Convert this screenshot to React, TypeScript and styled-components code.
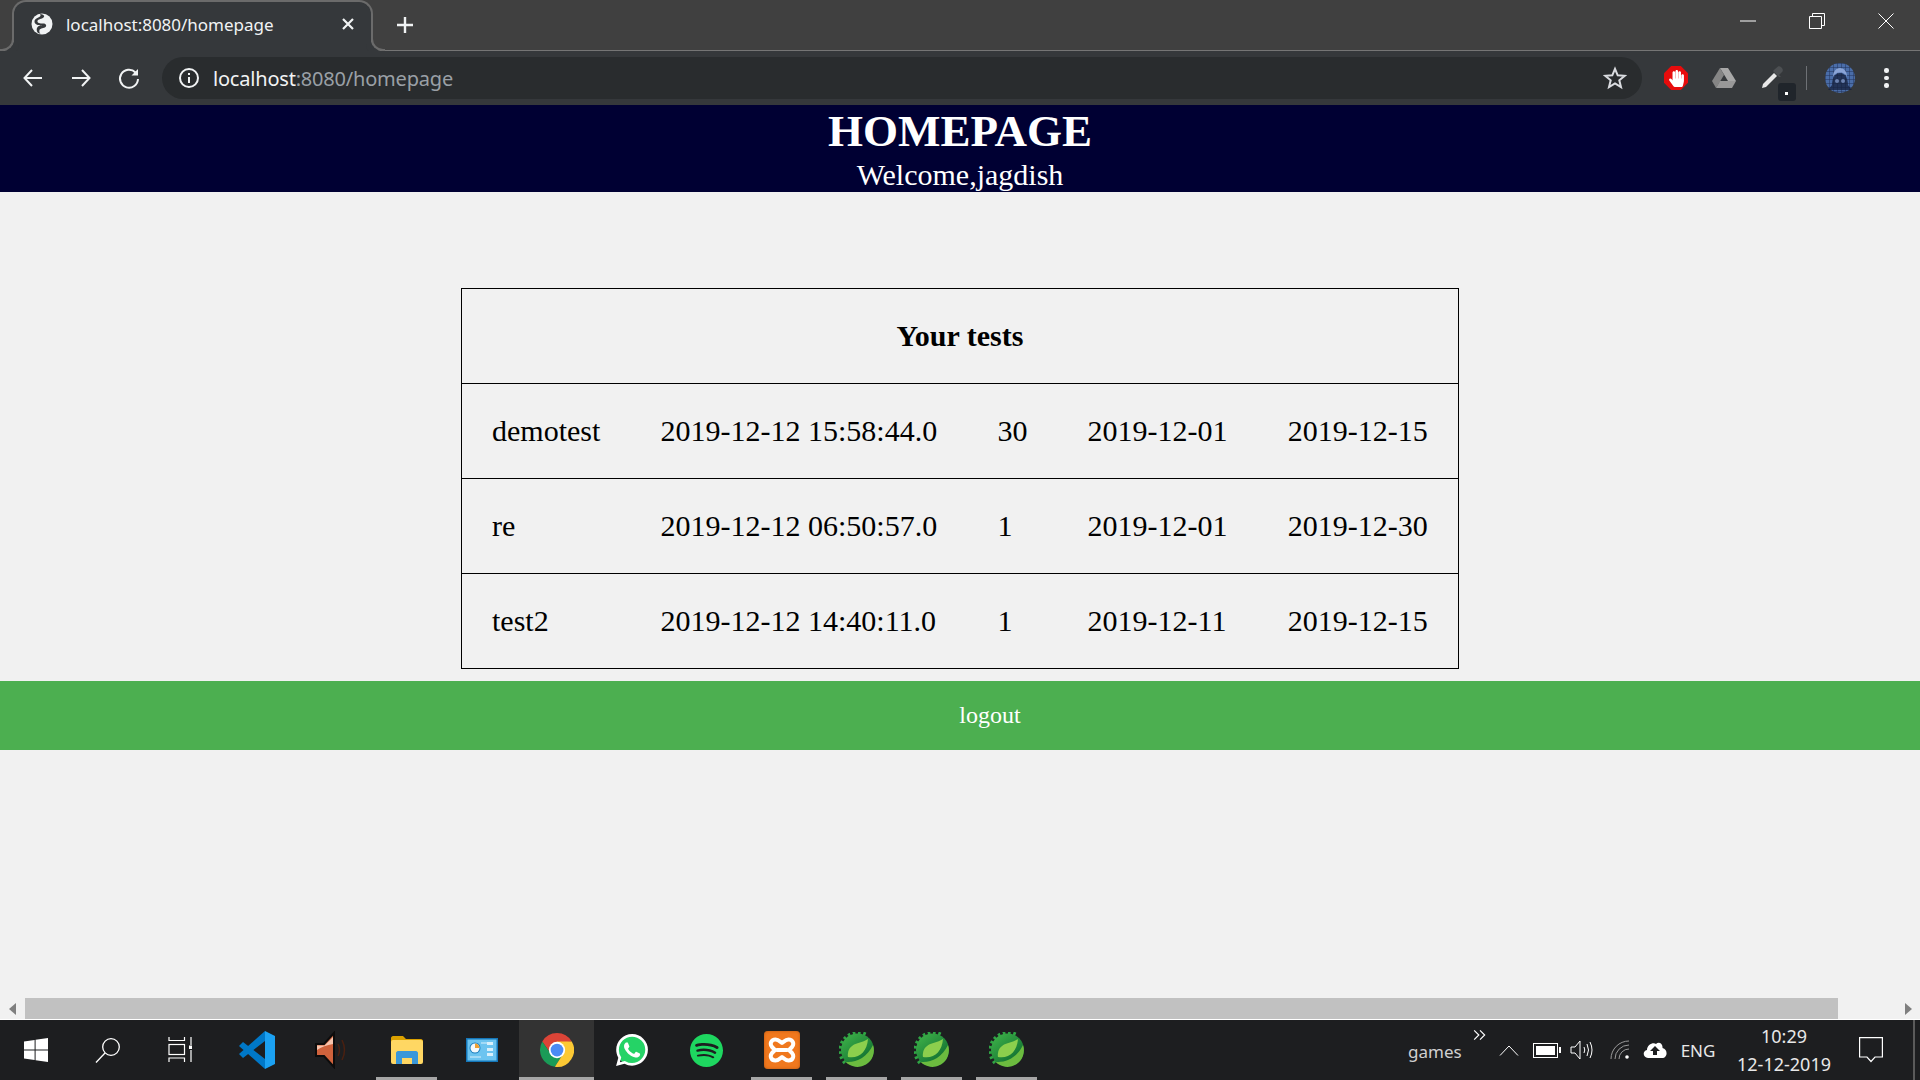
import React from "react"
import styled, { createGlobalStyle } from "styled-components"
import { FaHandPaper } from "react-icons/fa"
import { SiSpotify, SiWhatsapp } from "react-icons/si"

const rows = [
    ["demotest", "2019-12-12 15:58:44.0", "30", "2019-12-01", "2019-12-15"],
    ["re", "2019-12-12 06:50:57.0", "1", "2019-12-01", "2019-12-30"],
    ["test2", "2019-12-12 14:40:11.0", "1", "2019-12-11", "2019-12-15"],
]

function Globe() {
    return <svg width="22" height="22" viewBox="0 0 22 22">
        <circle cx="11" cy="11" r="10.5" fill="#f1f3f4" />
        <path d="M9 1 C13 1.5 14 3 12.5 4.5 C11 6 7 6 6.5 8 C6 10 9 10.5 12 10.5 C15 10.5 16 12.5 14.5 14 C13 15.5 9.5 15 8.5 17 C8 18.5 8.5 20 9.5 20.7 L7 20 C5.5 18 5 15.5 7 13.5 C8 12.5 10.5 13 11 12.5 C8 12.5 3.5 12 3.5 8.5 C3.5 5.5 7 5 9 3.5 C10 2.5 9.5 1.5 9 1Z" fill="#35383b" />
    </svg>
}

function Back({ flip }: { flip?: boolean }) {
    return <svg width="24" height="24" viewBox="0 0 24 24" fill="none" stroke="#f1f3f4" strokeWidth="2" style={{ transform: flip ? "scaleX(-1)" : undefined }}>
        <path d="M21 12 H4 M11 4 L3.5 12 L11 20" />
    </svg>
}

function Reload() {
    return <svg width="24" height="24" viewBox="0 0 24 24" fill="none" stroke="#f1f3f4" strokeWidth="2">
        <path d="M18.5 6.5 A9 9 0 1 0 21 13" />
        <path d="M21 3 V9.5 H14.5 Z" fill="#f1f3f4" stroke="none" />
    </svg>
}

function Info() {
    return <svg width="22" height="22" viewBox="0 0 22 22" fill="none" stroke="#f1f3f4" strokeWidth="2">
        <circle cx="11" cy="11" r="9" />
        <path d="M11 10 V16 M11 6 V8" />
    </svg>
}

function Star() {
    return <svg width="24" height="24" viewBox="0 0 24 24" fill="none" stroke="#dadce0" strokeWidth="2">
        <path d="M12 2.8 L14.7 9.3 L21.7 9.8 L16.3 14.3 L18 21.1 L12 17.4 L6 21.1 L7.7 14.3 L2.3 9.8 L9.3 9.3Z" />
    </svg>
}

function Drive() {
    return <svg width="24" height="22" viewBox="0 0 24 22">
        <path d="M8 1 L0 14 L4 21 L12 8Z" fill="#858585" />
        <path d="M8 1 H16 L24 14 H16Z" fill="#a8a8a8" />
        <path d="M4 21 L8 14 H24 L20 21Z" fill="#989898" />
    </svg>
}

function Dropper() {
    return <svg width="24" height="24" viewBox="0 0 24 24">
        <path d="M2 22 L3 18 L14 7 L17 10 L6 21 Z" fill="#e8e8e8" />
        <path d="M13 5 L15 3 L18 0.5 C20 -0.5 24 3 22.5 5.5 L19 9 L21 11 L19 11 Z" fill="#4c4f52" />
    </svg>
}

function Avatar() {
    return <svg width="30" height="30" viewBox="0 0 30 30">
        <defs>
            <pattern id="grid" width="4" height="4" patternUnits="userSpaceOnUse">
                <rect width="4" height="4" fill="#4a6da8" />
                <path d="M0 0 H4 M0 0 V4" stroke="#22325a" strokeWidth="1" />
            </pattern>
        </defs>
        <circle cx="15" cy="15" r="15" fill="url(#grid)" />
        <path d="M7 22 C7 6 23 6 23 22 L27 27 H3Z" fill="#16203c" opacity="0.75" />
        <path d="M8 14 C8 2 22 2 22 14 C20 8 10 8 8 14Z" fill="#8aa4d6" />
        <circle cx="12" cy="18" r="2" fill="#8aa4d6" opacity="0.7" />
        <circle cx="18" cy="18" r="2" fill="#8aa4d6" opacity="0.7" />
    </svg>
}

function Windows() {
    return <svg width="24" height="24" viewBox="0 0 24 24" fill="#fff">
        <path d="M0 3.4 L10.6 2 V11.4 H0Z M11.6 1.8 L24 0 V11.4 H11.6Z M0 12.5 H10.6 V22 L0 20.6Z M11.6 12.5 H24 V24 L11.6 22.2Z" />
    </svg>
}

function SearchGlyph() {
    return <svg width="26" height="28" viewBox="0 0 26 28" fill="none" stroke="#fff" strokeWidth="1.3">
        <circle cx="16" cy="11" r="8.3" />
        <path d="M10 17 L1 26.5" />
    </svg>
}

function TaskView() {
    return <svg width="24" height="26" viewBox="0 0 24 26" fill="none" stroke="#fff" strokeWidth="1.2">
        <path d="M1 0 V3.5 H16.5 V0 M1 25 V21 H16.5 V25" />
        <rect x="1" y="7.5" width="15.5" height="10" />
        <path d="M23 0 V8 M23 13 V25" />
        <rect x="21" y="8.5" width="3.5" height="3.5" fill="#fff" stroke="none" />
    </svg>
}

function VsCode() {
    return <svg width="36" height="38" viewBox="0 0 36 38">
        <path d="M26 0 L0 23 L4 27 L26 10Z" fill="#0078c8" />
        <path d="M26 38 L0 15 L4 11 L26 28Z" fill="#0078c8" />
        <path d="M26 0 L36 5 V33 L26 38Z" fill="#1ba1f2" />
    </svg>
}

function Speaker() {
    return <svg width="34" height="38" viewBox="0 0 34 38" fill="none">
        <path d="M1 13 H9 L19 2 V36 L9 25 H1Z" fill="#cf623c" stroke="#0c0c0c" strokeWidth="2" />
        <path d="M2 14.5 H9.5 L18 6 V13 C12 14 6 16 2 19Z" fill="#f6c4ad" />
        <path d="M23 13 Q26 19 23 25 M27 9 Q32 19 27 29" stroke="#4a2010" strokeWidth="1.5" />
    </svg>
}

function Explorer() {
    return <svg width="32" height="28" viewBox="0 0 32 28">
        <path d="M0 2 C0 1 1 0 2 0 H12 L15 3 H30 C31 3 32 4 32 5 V10 H0Z" fill="#dba100" />
        <rect y="4" width="32" height="24" rx="2" fill="#ffd763" />
        <path d="M5 28 V17 C5 16 6 15 7 15 H25 C26 15 27 16 27 17 V28 H21 V22 H11 V28Z" fill="#3a97d9" />
    </svg>
}

function ControlPanel() {
    return <svg width="32" height="24" viewBox="0 0 32 24">
        <rect width="32" height="24" fill="#1476b8" />
        <rect x="1.5" y="1.5" width="29" height="21" fill="#6cc4f0" />
        <circle cx="9" cy="10" r="5.5" fill="#1f7fbe" />
        <circle cx="9" cy="10" r="4.5" fill="#f4f9fc" />
        <path d="M9 10 V5.5 A4.5 4.5 0 0 1 13.5 10Z" fill="#f0a030" />
        <path d="M21 4 H27 V7 H21Z M21 10 H27 V13 H21Z M21 15 H27 V18 H21Z" fill="#d9f0fb" />
        <path d="M4 19 H15 M15 5 H21" stroke="#d9f0fb" strokeWidth="1" />
    </svg>
}

function ChromeLogo() {
    return <svg width="34" height="36" viewBox="0 0 48 48">
        <path d="M44.8 12 A24 24 0 0 0 3.2 12 L15 29 L24 14Z" fill="#db4437" />
        <path d="M3.2 12 A24 24 0 0 0 21 47.8 L33 29 L15 29Z" fill="#1a9b57" />
        <path d="M21 47.8 A24 24 0 0 0 44.8 12 H24 L33 29Z" fill="#fcc934" />
        <circle cx="24" cy="24" r="11.5" fill="#fff" />
        <circle cx="24" cy="24" r="9" fill="#4b8bf5" />
    </svg>
}

function Spring() {
    return <svg width="36" height="36" viewBox="0 0 36 36">
        <defs>
            <linearGradient id="springBase" x1="0.1" y1="0" x2="0.8" y2="0.9">
                <stop offset="0" stopColor="#3fb349" />
                <stop offset="1" stopColor="#0d6a30" />
            </linearGradient>
        </defs>
        <path d="M6 31 A18 18 0 0 1 28 3" fill="none" stroke="#2fa544" strokeWidth="3.5" strokeDasharray="2.6 2.6" />
        <circle cx="18.5" cy="18" r="16.5" fill="url(#springBase)" />
        <path d="M6.5 29.8 C16 31 28 26 34 13 A16.5 16.5 0 0 1 6.5 29.8Z" fill="#6cbb3f" />
        <path d="M29 7 C22 12 11 10 9 21 C8.5 23 9 25 9 25 C20 27 28 20 29 7Z" fill="#8ccf4d" />
    </svg>
}

function XamppMark() {
    return <svg width="28" height="28" viewBox="0 0 28 28" fill="none" stroke="#fff" strokeWidth="4" strokeLinejoin="round" strokeLinecap="round">
        <path d="M7.5 3.5 C3 3.5 1.5 8 4 11 L7 14 L4 17 C1.5 20 3 24.5 7.5 24.5 C10 24.5 12 22.5 14 21 C16 22.5 18 24.5 20.5 24.5 C25 24.5 26.5 20 24 17 L21 14 L24 11 C26.5 8 25 3.5 20.5 3.5 C18 3.5 16 5.5 14 7 C12 5.5 10 3.5 7.5 3.5Z" />
        <path d="M9 14 H19" />
    </svg>
}

function Cloud() {
    return <svg width="24" height="18" viewBox="0 0 24 18">
        <path d="M5 17 C0 17 -1 10 4 9 C4 4 10 1 13 3 C16 0 20 3 19.5 7 C25 8 25 17 19 17Z" fill="#fff" />
        <path d="M12 5 L17 10 H14 V14 H10 V10 H7Z" fill="#1d1e20" />
    </svg>
}

function Volume() {
    return <svg width="24" height="20" viewBox="0 0 24 20" fill="none" stroke="#fff" strokeWidth="1">
        <path d="M1 7 H5 L10 1 V19 L5 13 H1Z" />
        <path d="M14 7 Q15.5 10 14 13 M17 4 Q20 10 17 16 M20 2 Q24 10 20 18" />
    </svg>
}

function Wifi() {
    return <svg width="20" height="20" viewBox="0 0 20 20" fill="none" stroke="#9a9a9a" strokeWidth="1">
        <path d="M1 19 A18 18 0 0 1 19 1 M5 19 A14 14 0 0 1 19 5 M9 19 A10 10 0 0 1 19 9" />
        <circle cx="17" cy="17" r="1.8" fill="#fff" stroke="none" />
    </svg>
}

export default function App() {
    return <>
        <Global />
        <Screen>
            <TabStrip>
                <Tab>
                    <Globe />
                    <TabTitle>localhost:8080/homepage</TabTitle>
                    <TabClose viewBox="0 0 12 12"><path d="M1 1 L11 11 M11 1 L1 11" /></TabClose>
                </Tab>
                <NewTab viewBox="0 0 18 18"><path d="M9 1 V17 M1 9 H17" /></NewTab>
                <WindowButtons>
                    <svg width="16" height="2" viewBox="0 0 16 2"><path d="M0 1 H16" stroke="#fff" /></svg>
                    <svg width="16" height="16" viewBox="0 0 16 16" fill="none" stroke="#fff"><path d="M3.5 3 V0.5 H15.5 V12.5 H13 M0.5 3.5 H12.5 V15.5 H0.5Z" /></svg>
                    <svg width="16" height="16" viewBox="0 0 16 16" fill="none" stroke="#fff"><path d="M0.5 0.5 L15.5 15.5 M15.5 0.5 L0.5 15.5" /></svg>
                </WindowButtons>
            </TabStrip>
            <Toolbar>
                <NavButton><Back /></NavButton>
                <NavButton><Back flip /></NavButton>
                <NavButton><Reload /></NavButton>
                <Omnibox>
                    <Info />
                    <Url>localhost<UrlRest>:8080/homepage</UrlRest></Url>
                    <Star />
                </Omnibox>
                <Extensions>
                    <Extension>
                        <AdBlock><FaHandPaper size={17} color="#fff" /></AdBlock>
                    </Extension>
                    <Extension><Drive /></Extension>
                    <Extension>
                        <Dropper />
                        <DropperBadge />
                    </Extension>
                    <Separator />
                    <Extension><Avatar /></Extension>
                    <Dots><span /><span /><span /></Dots>
                </Extensions>
            </Toolbar>
            <Page>
                <Header>
                    <Title>HOMEPAGE</Title>
                    <Welcome>Welcome,jagdish</Welcome>
                </Header>
                <Tests>
                    <tbody>
                        <tr><Heading colSpan={5}>Your tests</Heading></tr>
                        {rows.map(row => <tr key={row[0]}>
                            {row.map((cell, i) => <Cell key={i}>{cell}</Cell>)}
                        </tr>)}
                    </tbody>
                </Tests>
                <Logout>logout</Logout>
            </Page>
            <Scrollbar>
                <ScrollArrow viewBox="0 0 7 12"><path d="M7 0 V12 L0 6Z" /></ScrollArrow>
                <Thumb />
                <ScrollArrow viewBox="0 0 7 12"><path d="M0 0 V12 L7 6Z" /></ScrollArrow>
            </Scrollbar>
            <Taskbar>
                <QuickCell><Windows /></QuickCell>
                <QuickCell><SearchGlyph /></QuickCell>
                <QuickCell><TaskView /></QuickCell>
                <Apps>
                    <AppCell><VsCode /></AppCell>
                    <AppCell><Speaker /></AppCell>
                    <AppCell $open><Explorer /></AppCell>
                    <AppCell><ControlPanel /></AppCell>
                    <AppCell $open $active><ChromeLogo /></AppCell>
                    <AppCell><WhatsApp><SiWhatsapp size={32} color="#fff" /></WhatsApp></AppCell>
                    <AppCell><SiSpotify size={33} color="#1ed760" /></AppCell>
                    <AppCell $open><Xampp><XamppMark /></Xampp></AppCell>
                    <AppCell $open><Spring /></AppCell>
                    <AppCell $open><Spring /></AppCell>
                    <AppCell $open><Spring /></AppCell>
                </Apps>
                <Tray>
                    <Games>
                        games
                        <More viewBox="0 0 12 10"><path d="M1 1 L5 5 L1 9 M6 1 L10 5 L6 9" /></More>
                    </Games>
                    <TrayCell $w={36}><svg width="20" height="11" viewBox="0 0 20 11" fill="none" stroke="#fff"><path d="M1 10.5 L10 1 L19 10.5" /></svg></TrayCell>
                    <TrayCell $w={36}><Battery /></TrayCell>
                    <TrayCell $w={38}><Volume /></TrayCell>
                    <TrayCell $w={38}><Wifi /></TrayCell>
                    <TrayCell $w={32}><Cloud /></TrayCell>
                    <TrayCell $w={60}><Lang>ENG</Lang></TrayCell>
                    <Clock>
                        <span>10:29</span>
                        <span>12-12-2019</span>
                    </Clock>
                    <TrayCell $w={68}>
                        <svg width="24" height="26" viewBox="0 0 24 26" fill="none" stroke="#fff" strokeWidth="1.2"><path d="M0.6 0.6 H23.4 V20 H16 L12 24.5 L8 20 H0.6Z" /></svg>
                    </TrayCell>
                    <ShowDesktop />
                </Tray>
            </Taskbar>
        </Screen>
    </>
}

const Global = createGlobalStyle`
  html, body {
    margin: 0;
    padding: 0;
    overflow: hidden;
  }
`
const Screen = styled.div`
  width: 1920px;
  height: 1080px;
  display: flex;
  flex-direction: column;
  overflow: hidden;
  font-family: "Noto Sans", "Liberation Sans", sans-serif;
  background: #f1f1f1;
`
const TabStrip = styled.div`
  height: 50px;
  flex: none;
  display: flex;
  align-items: stretch;
  padding-left: 12px;
  background: #404040;
  border-bottom: 2px solid #757575;
  box-sizing: content-box;
  margin-bottom: -1px;
`
const Tab = styled.div`
  position: relative;
  width: 361px;
  height: 51px;
  box-sizing: border-box;
  display: flex;
  align-items: center;
  padding: 0 17px 5px 17px;
  background: #35383b;
  border: 2px solid #6b6b6b;
  border-bottom: none;
  border-radius: 14px 14px 0 0;

  &::before, &::after {
    content: "";
    position: absolute;
    bottom: 0;
    width: 12px;
    height: 12px;
    border-bottom: 2px solid #6b6b6b;
  }
  &::before {
    left: -14px;
    border-right: 2px solid #6b6b6b;
    border-bottom-right-radius: 12px;
    box-shadow: 5px 5px 0 #35383b;
  }
  &::after {
    right: -14px;
    border-left: 2px solid #6b6b6b;
    border-bottom-left-radius: 12px;
    box-shadow: -5px 5px 0 #35383b;
  }
`
const TabTitle = styled.span`
  margin-left: 13px;
  flex: 1;
  font-size: 17px;
  letter-spacing: -0.02px;
  color: #f1f3f4;
`
const TabClose = styled.svg`
  width: 12px;
  height: 12px;
  fill: none;
  stroke: #f1f3f4;
  stroke-width: 2.2;
`
const NewTab = styled.svg`
  width: 18px;
  height: 18px;
  margin: 16px 0 0 23px;
  fill: none;
  stroke: #f1f3f4;
  stroke-width: 2.4;
`
const WindowButtons = styled.div`
  margin-left: auto;
  width: 180px;
  height: 42px;
  padding-right: 26px;
  display: flex;
  align-items: center;
  justify-content: space-between;
  box-sizing: border-box;
`
const Toolbar = styled.div`
  height: 54px;
  flex: none;
  display: flex;
  align-items: center;
  padding-left: 9px;
  background: #35383b;
  box-sizing: border-box;
  position: relative;
`
const NavButton = styled.div`
  width: 48px;
  display: flex;
  justify-content: center;
`
const Omnibox = styled.div`
  width: 1480px;
  height: 42px;
  margin-left: 9px;
  padding: 0 15px 0 16px;
  display: flex;
  align-items: center;
  box-sizing: border-box;
  background: #292c2e;
  border-radius: 21px;
`
const Url = styled.span`
  flex: 1;
  margin-left: 13px;
  font-size: 20px;
  letter-spacing: -0.2px;
  color: #f1f3f4;
`
const UrlRest = styled.span`
  color: #9aa0a6;
`
const Extensions = styled.div`
  flex: 1;
  display: flex;
  align-items: center;
  padding-left: 10px;
`
const Extension = styled.div`
  position: relative;
  width: 48px;
  display: flex;
  justify-content: center;
`
const AdBlock = styled.div`
  width: 24px;
  height: 24px;
  display: flex;
  align-items: center;
  justify-content: center;
  background: #e70c0c;
  clip-path: polygon(30% 0, 70% 0, 100% 30%, 100% 70%, 70% 100%, 30% 100%, 0 70%, 0 30%);
`
const DropperBadge = styled.div`
  position: absolute;
  right: 0;
  bottom: -11px;
  width: 18px;
  height: 18px;
  border-radius: 3px;
  background: #20252b;

  &::after {
    content: "";
    position: absolute;
    left: 7px;
    top: 9px;
    width: 3px;
    height: 3px;
    background: #fff;
  }
`
const Separator = styled.div`
  width: 1px;
  height: 24px;
  margin: 0 9px 0 10px;
  background: #6e7175;
`
const Dots = styled.div`
  margin-left: 20px;
  display: flex;
  flex-direction: column;
  gap: 3px;

  span {
    width: 4.5px;
    height: 4.5px;
    border-radius: 50%;
    background: #f1f3f4;
  }
`
const Page = styled.div`
  flex: 1;
  min-height: 0;
  overflow: hidden;
  background: #f1f1f1;
  font-family: "Liberation Serif", "Times New Roman", serif;
  color: #000;
`
const Header = styled.header`
  height: 87px;
  background: #000033;
  color: #fff;
  text-align: center;
  overflow: hidden;
`
const Title = styled.h1`
  margin: 0;
  font-size: 45px;
  line-height: 53px;
`
const Welcome = styled.div`
  margin-top: -1px;
  font-size: 30px;
  line-height: 35px;
`
const Tests = styled.table`
  width: 998px;
  margin: 96px auto 0;
  border-collapse: collapse;
  border: 1px solid #000;
`
const Heading = styled.th`
  padding: 30px;
  font-size: 30px;
  line-height: 34px;
  border: 1px solid #000;
`
const Cell = styled.td`
  padding: 30px;
  font-size: 30px;
  line-height: 34px;
  border-top: 1px solid #000;
`
const Logout = styled.button`
  display: block;
  width: 100%;
  box-sizing: content-box;
  margin-top: 12px;
  padding: 21px 30px;
  border: none;
  background: #4caf50;
  color: #fff;
  font-family: "Liberation Serif", "Times New Roman", serif;
  font-size: 24px;
  line-height: 27px;
`
const Scrollbar = styled.div`
  height: 21px;
  flex: none;
  display: flex;
  align-items: center;
  background: #f1f1f1;
  padding: 0 8px 0 9px;
  border-bottom: 1px solid #fff;
`
const ScrollArrow = styled.svg`
  width: 7px;
  height: 12px;
  fill: #7f7f7f;
`
const Thumb = styled.div`
  width: 1813px;
  height: 21px;
  margin: 0 auto 0 9px;
  background: #c1c1c1;
`
const Taskbar = styled.div`
  height: 60px;
  flex: none;
  display: flex;
  background: #1d1e20;
  color: #fff;
  position: relative;
`
const QuickCell = styled.div`
  width: 72px;
  display: flex;
  align-items: center;
  justify-content: center;
`
const Apps = styled.div`
  display: flex;
  margin-left: 3px;
`
const AppCell = styled.div<{ $open?: boolean; $active?: boolean }>`
  position: relative;
  width: 75px;
  display: flex;
  align-items: center;
  justify-content: center;
  background: ${p => p.$active ? "#333333" : "transparent"};

  &::after {
    content: "";
    display: ${p => p.$open ? "block" : "none"};
    position: absolute;
    left: ${p => p.$active ? "0" : "7px"};
    right: ${p => p.$active ? "0" : "7px"};
    bottom: 0;
    height: 3px;
    background: #a6a6a6;
  }
`
const WhatsApp = styled.div`
  width: 33px;
  height: 33px;
  display: flex;
  align-items: center;
  justify-content: center;
  border-radius: 50%;
  background: radial-gradient(circle, #25d366 62%, transparent 64%);
`
const Xampp = styled.div`
  width: 36px;
  height: 38px;
  display: flex;
  align-items: center;
  justify-content: center;
  border-radius: 4px;
  background: #f0781e;
  box-shadow: inset 0 0 3px #b9560f;
`
const Tray = styled.div`
  margin-left: auto;
  display: flex;
  align-items: stretch;
`
const Games = styled.div`
  position: relative;
  width: 88px;
  display: flex;
  align-items: center;
  font-size: 17px;
  color: #d0d0d0;
  padding: 3px 0 0 5px;
  box-sizing: border-box;
`
const More = styled.svg`
  position: absolute;
  right: 4px;
  top: 9px;
  width: 14px;
  height: 12px;
  fill: none;
  stroke: #fff;
`
const TrayCell = styled.div<{ $w: number }>`
  width: ${p => p.$w}px;
  display: flex;
  align-items: center;
  justify-content: center;
`
const Battery = styled.div`
  position: relative;
  width: 19px;
  height: 9px;
  background: #fff;
  border: 2px solid #1d1e20;
  outline: 1px solid #fff;

  &::after {
    content: "";
    position: absolute;
    right: -6px;
    top: 1px;
    width: 2px;
    height: 6px;
    background: #fff;
  }
`
const Lang = styled.span`
  margin-right: 6px;
  font-size: 17px;
  color: #e8e8e8;
`
const Clock = styled.div`
  width: 106px;
  display: flex;
  flex-direction: column;
  align-items: center;
  justify-content: center;
  gap: 5px;
  font-size: 18px;
  line-height: 23px;
  color: #e8e8e8;
`
const ShowDesktop = styled.div`
  width: 5px;
  margin-left: 8px;
  border-left: 2px solid #5a5a5a;
`
